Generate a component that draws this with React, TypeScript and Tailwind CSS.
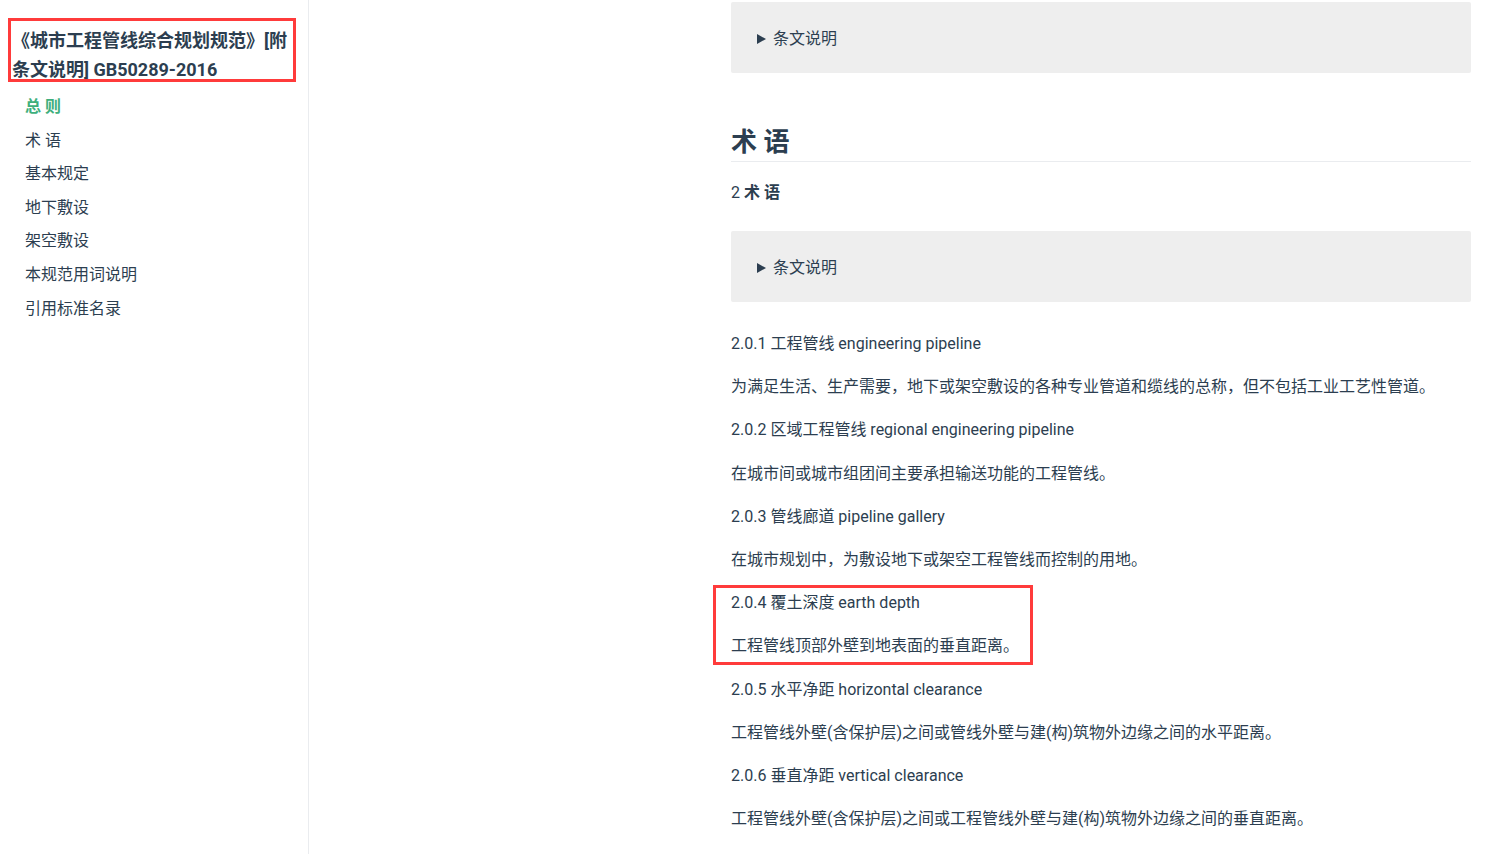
import React from "react";

const FONT = 'Roboto, "Noto Sans CJK SC", sans-serif';

const navItems = ["术 语", "基本规定", "地下敷设", "架空敷设", "本规范用词说明", "引用标准名录"];

const terms: [string, string][] = [
  ["2.0.1 工程管线 engineering pipeline", "为满足生活、生产需要，地下或架空敷设的各种专业管道和缆线的总称，但不包括工业工艺性管道。"],
  ["2.0.2 区域工程管线 regional engineering pipeline", "在城市间或城市组团间主要承担输送功能的工程管线。"],
  ["2.0.3 管线廊道 pipeline gallery", "在城市规划中，为敷设地下或架空工程管线而控制的用地。"],
  ["2.0.4 覆土深度 earth depth", "工程管线顶部外壁到地表面的垂直距离。"],
  ["2.0.5 水平净距 horizontal clearance", "工程管线外壁(含保护层)之间或管线外壁与建(构)筑物外边缘之间的水平距离。"],
  ["2.0.6 垂直净距 vertical clearance", "工程管线外壁(含保护层)之间或工程管线外壁与建(构)筑物外边缘之间的垂直距离。"],
];

// ---- local components ------------------------------------------------------

function Details() {
  return (
    <div className="flex h-[71px] items-center rounded-[2px] bg-[#eeeeee] pl-[26px] pt-[2px]">
      <svg width="9" height="10" viewBox="0 0 9 10" className="mr-[7px]" aria-hidden>
        <path d="M0 0 L9 5 L0 10 Z" fill="#2c3e50" />
      </svg>
      <span className="text-[16px] leading-[27px]">条文说明</span>
    </div>
  );
}

function Term({ title, body, marked }: { title: string; body: string; marked?: boolean }) {
  return (
    <div className="relative flex flex-col gap-4">
      <p className="text-[16px] leading-[27.2px]">{title}</p>
      <p className="text-[16px] leading-[27.2px]">{body}</p>
      {marked && (
        <div className="pointer-events-none absolute left-[-18px] top-[-4.5px] h-[80px] w-[320px] border-[3px] border-[#ff3b3b]" />
      )}
    </div>
  );
}

// ---- page ------------------------------------------------------------------

export default function App() {
  return (
    <div className="flex min-h-[854px] bg-white text-[#2c3e50]" style={{ fontFamily: FONT }}>
      <aside className="w-[309px] shrink-0 border-r border-[#eaecef]">
        <div className="relative ml-[12px] mt-[26px] w-[284px]">
          <h1 className="text-[18px] font-bold leading-[29px] text-[#2c3e50]">
            《城市工程管线综合规划规范》[附
            <br />
            条文说明] GB50289-2016
          </h1>
          <div className="pointer-events-none absolute left-[-4px] top-[-8px] h-[64px] w-[288px] border-[3px] border-[#ff3b3b]" />
        </div>
        <nav className="mt-[6.5px] flex flex-col">
          <a className="py-[5.6px] pl-[25px] text-[16px] font-bold leading-[22.4px] text-[#3eaf7c]">总 则</a>
          {navItems.map((n) => (
            <a key={n} className="py-[5.6px] pl-[25px] text-[16px] leading-[22.4px]">
              {n}
            </a>
          ))}
        </nav>
      </aside>

      <main className="pl-[422px] pt-[2px]">
        <div className="w-[740px]">
          <Details />
          <h2 className="mt-[53px] border-b border-[#eaecef] pb-[3px] text-[26px] font-bold leading-[32px]">术 语</h2>
          <p className="mt-[17px] text-[16px] leading-[27px]">
            2 <span className="font-semibold">术 语</span>
          </p>
          <div className="mt-[25px]">
            <Details />
          </div>
          <div className="mt-[28px] flex flex-col gap-4">
            {terms.map(([t, b], i) => (
              <Term key={t} title={t} body={b} marked={i === 3} />
            ))}
          </div>
        </div>
      </main>
    </div>
  );
}
